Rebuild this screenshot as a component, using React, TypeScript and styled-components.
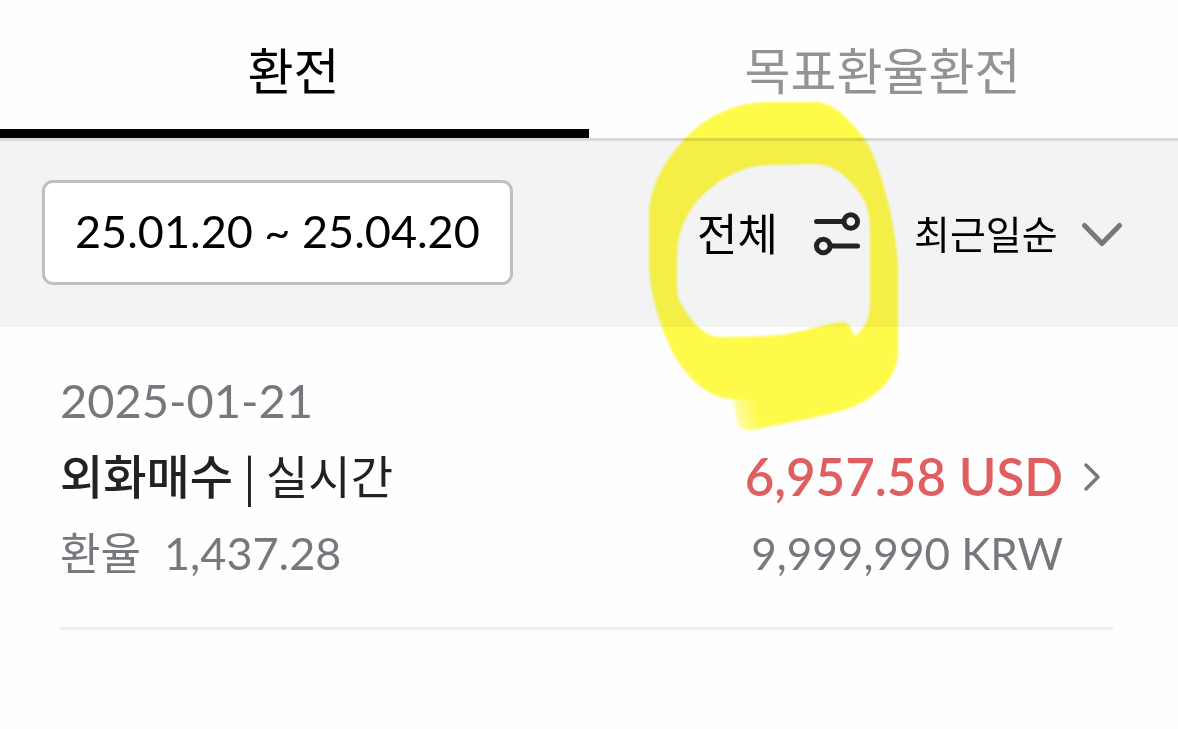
import React from "react";
import styled, { createGlobalStyle } from "styled-components";

const GlobalStyle = createGlobalStyle`
  *, *::before, *::after { box-sizing: border-box; }
  body {
    margin: 0;
    background: #fefefe;
    color: #000;
    font-family: Lato, "Noto Sans CJK KR", sans-serif;
  }
  button, select {
    margin: 0;
    padding: 0;
    border: 0;
    background: none;
    color: inherit;
    font-family: inherit;
    cursor: pointer;
  }
`;

const Tabs = styled.nav`
  display: flex;
  border-bottom: 3px solid #d9d9d9;
`;

const Tab = styled.button<{ $active?: boolean }>`
  && {
    flex: 1;
    height: 138px;
    padding-top: 12px;
    padding-right: 2px;
    border-bottom: 9px solid ${(p) => (p.$active ? "#000" : "transparent")};
    color: ${(p) => (p.$active ? "#000" : "#939393")};
    font-size: 50px;
    font-weight: 400;
    line-height: 60px;
  }
`;

const FilterBar = styled.section`
  display: flex;
  align-items: center;
  justify-content: space-between;
  padding: 39px 55px 42px 42px;
  background: #f3f3f3;
`;

const PeriodButton = styled.button`
  && {
    padding: 19px 30px 21px;
    border: 3px solid #bfbfbf;
    border-radius: 11px;
    background: #fff;
    font-size: 45px;
    line-height: 59px;
    white-space: nowrap;
  }
`;

const Controls = styled.div`
  display: flex;
  align-items: center;
  gap: 53px;
  padding-top: 2px;
`;

const FilterWrap = styled.div`
  position: relative;
`;

const FilterButton = styled.button`
  && {
    display: flex;
    align-items: center;
    gap: 36px;
    font-size: 44px;
    line-height: 60px;
    white-space: nowrap;
  }
`;

const Highlight = styled.svg`
  position: absolute;
  z-index: 1;
  top: -114px;
  left: -67px;
  width: 290px;
  height: 350px;
  mix-blend-mode: multiply;
  pointer-events: none;
`;

const SortLabel = styled.label`
  display: flex;
  align-items: center;
  gap: 23px;
`;

const SortSelect = styled.select`
  && {
    appearance: none;
    font-size: 39px;
    line-height: 60px;
  }
`;

const List = styled.ul`
  margin: 0;
  padding: 0 65px 0 60px;
  list-style: none;
`;

const Item = styled.li`
  border-bottom: 3px solid #eee;
`;

const ItemLink = styled.a`
  display: grid;
  grid-template-columns: 1fr auto 20px;
  column-gap: 19px;
  padding: 36px 11px 36px 0;
  color: #75787d;
  font-size: 45px;
  line-height: 76px;
  text-decoration: none;
  white-space: nowrap;
`;

const DateText = styled.time`
  grid-column: 1 / -1;
  font-size: 47px;
  line-height: 74px;
  padding-bottom: 2px;
`;

const Title = styled.span`
  color: #222;
  font-family: "Noto Sans CJK KR", sans-serif;
  font-size: 46px;
  line-height: 70px;
`;

const Kind = styled.strong`
  font-size: 47px;
  font-weight: 500;
`;

const Amount = styled.span`
  color: #e15e60;
  font-size: 51px;
  font-weight: 600;
  text-align: right;
`;

const Rate = styled.span`
  display: flex;
  gap: 23px;
`;

const RateLabel = styled.span`
  font-size: 44px;
`;

const Won = styled.span`
  font-size: 44px;
  text-align: right;
`;

const ChevronCell = styled.svg`
  align-self: center;
`;

export default function App() {
  return (
    <>
      <GlobalStyle />
      <Tabs>
        <Tab type="button" $active aria-current="page">환전</Tab>
        <Tab type="button">목표환율환전</Tab>
      </Tabs>
      <main>
        <FilterBar>
          <PeriodButton type="button">25.01.20 ~ 25.04.20</PeriodButton>
          <Controls>
            <FilterWrap>
              <FilterButton type="button">
                전체
                <svg width="47" height="46" viewBox="0 0 47 46" fill="none" stroke="#222" strokeWidth="5" strokeLinecap="round" aria-hidden="true">
                  <path d="M2.500 10.500H29" />
                  <circle cx="36.800" cy="10.500" r="6.800" />
                  <circle cx="9.300" cy="35" r="6.800" />
                  <path d="M17 35H43.500" />
                </svg>
              </FilterButton>
              <Highlight viewBox="0 0 290 350" aria-hidden="true">
                <defs>
                  <filter id="soft" x="-5%" y="-5%" width="110%" height="110%">
                    <feGaussianBlur stdDeviation="1.3" />
                  </filter>
                  <linearGradient id="tail" gradientUnits="userSpaceOnUse" x1="103" y1="320" x2="128" y2="314">
                    <stop offset="0" stopColor="#fffb48" stopOpacity="0.45" />
                    <stop offset="1" stopColor="#fffb48" />
                  </linearGradient>
                </defs>
                <g filter="url(#soft)">
                  <path
                    fill="#fffb48"
                    fillRule="evenodd"
                    d="M140 12L185 12C205 12 222 33 234 48C250 72 265 130 268 175L268 262C268 285 250 306 220 318C190 322 150 309 103 309C80 309 60 290 47 270C30 240 18 200 19 165L19 125C20 90 40 65 57 46C80 25 105 12 140 12Z M140 75L185 74C205 74 222 90 234 110C239 120 240 130 240 140L240 210C240 230 236 235 225 247C222 240 219 232 213 232C195 233 180 241 150 245C125 247 105 247 88 247C72 245 60 230 50 212C46 205 47 195 47 180L47 165C47 145 55 125 68 110C85 92 110 75 140 75Z"
                  />
                  <path fill="url(#tail)" d="M103 308L222 308L222 317C195 327 150 334 122 340C113 342 108 337 107 330Z" />
                </g>
              </Highlight>
            </FilterWrap>
            <SortLabel>
              <SortSelect aria-label="정렬">
                <option>최근일순</option>
              </SortSelect>
              <svg width="42" height="26" viewBox="0 0 42 26" fill="none" stroke="#75787d" strokeWidth="5" strokeLinecap="round" strokeLinejoin="round" aria-hidden="true">
                <path d="M3.500 4.500L21 22.500L38.500 4.500" />
              </svg>
            </SortLabel>
          </Controls>
        </FilterBar>
        <List>
          <Item>
            <ItemLink href="#detail">
              <DateText dateTime="2025-01-21">2025-01-21</DateText>
              <Title><Kind>외화매수</Kind> | 실시간</Title>
              <Amount>6,957.58 USD</Amount>
              <ChevronCell width="20" height="30" viewBox="0 0 20 30" fill="none" stroke="#75787d" strokeWidth="3.500" strokeLinecap="round" strokeLinejoin="round" aria-hidden="true">
                <path d="M4 3L16 15L4 27" />
              </ChevronCell>
              <Rate><RateLabel>환율</RateLabel>1,437.28</Rate>
              <Won>9,999,990 KRW</Won>
            </ItemLink>
          </Item>
        </List>
      </main>
    </>
  );
}
